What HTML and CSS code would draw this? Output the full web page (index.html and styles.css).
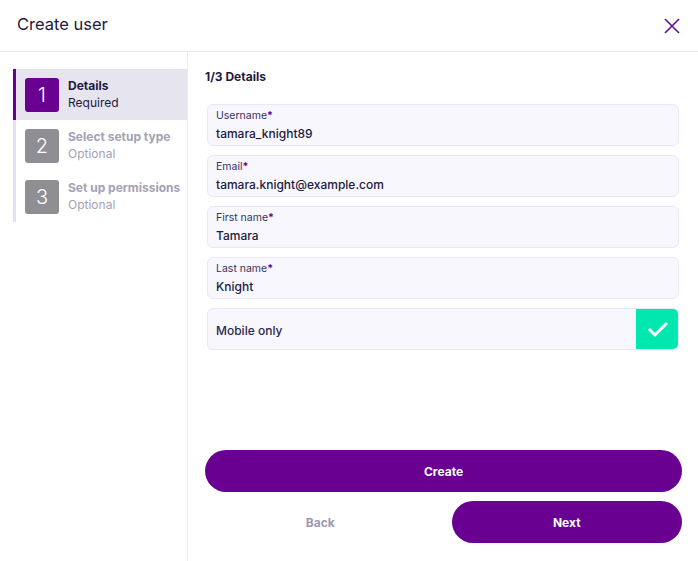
FILE: index.html
```html
<!DOCTYPE html>
<html lang="en">
<head>
    <meta charset="UTF-8">
    <meta name="viewport" content="width=device-width, initial-scale=1.0">
    <title>Create user</title>
    <link rel="stylesheet" href="styles.css">
</head>
<body>
    <div class="modal">
        <header class="modal-header">
            <h1 class="modal-title">Create user</h1>
            <button class="close-btn" aria-label="Close">
                <svg width="16" height="16" viewBox="0 0 16 16">
                    <path d="M1 1 L15 15 M15 1 L1 15" stroke="#6a0a92" stroke-width="1.6" fill="none"/>
                </svg>
            </button>
        </header>

        <div class="modal-body">
            <aside class="steps">
                <ul class="steps-list">
                    <li class="step active">
                        <span class="step-num">1</span>
                        <div class="step-text">
                            <span class="step-name">Details</span>
                            <span class="step-sub">Required</span>
                        </div>
                    </li>
                    <li class="step">
                        <span class="step-num">2</span>
                        <div class="step-text">
                            <span class="step-name">Select setup type</span>
                            <span class="step-sub">Optional</span>
                        </div>
                    </li>
                    <li class="step">
                        <span class="step-num">3</span>
                        <div class="step-text">
                            <span class="step-name">Set up permissions</span>
                            <span class="step-sub">Optional</span>
                        </div>
                    </li>
                </ul>
            </aside>

            <main class="content">
                <h2 class="content-title">1/3 Details</h2>

                <div class="fields">
                    <label class="field">
                        <span class="field-label">Username<b>*</b></span>
                        <span class="field-value">tamara_knight89</span>
                    </label>
                    <label class="field">
                        <span class="field-label">Email<b>*</b></span>
                        <span class="field-value">tamara.knight@example.com</span>
                    </label>
                    <label class="field">
                        <span class="field-label">First name<b>*</b></span>
                        <span class="field-value">Tamara</span>
                    </label>
                    <label class="field">
                        <span class="field-label">Last name<b>*</b></span>
                        <span class="field-value">Knight</span>
                    </label>
                    <label class="field field-check">
                        <span class="check-label">Mobile only</span>
                        <span class="check-box">
                            <svg width="22" height="18" viewBox="0 0 22 18">
                                <path d="M2 9 L8 15 L20 3" stroke="#fff" stroke-width="3" fill="none"/>
                            </svg>
                        </span>
                    </label>
                </div>

                <div class="actions">
                    <button class="btn btn-primary">Create</button>
                    <div class="actions-row">
                        <button class="btn btn-ghost">Back</button>
                        <button class="btn btn-primary">Next</button>
                    </div>
                </div>
            </main>
        </div>
    </div>
</body>
</html>
```

FILE: styles.css
```css
* {
    box-sizing: border-box;
    margin: 0;
    padding: 0;
    font-family: 'Inter', 'Liberation Sans', sans-serif;
}

body {
    background: #fff;
    color: #1e1a3c;
}

.modal {
    width: 698px;
    height: 561px;
    display: flex;
    flex-direction: column;
}

.modal-header {
    height: 52px;
    display: flex;
    align-items: center;
    justify-content: space-between;
    padding: 0 18px 0 17px;
    border-bottom: 1px solid #e9e7f5;
}

.modal-title {
    font-size: 16.5px;
    font-weight: 400;
    color: #1e1a3c;
    margin-top: -3px;
}

.close-btn {
    background: none;
    border: none;
    width: 16px;
    height: 16px;
    display: flex;
    cursor: pointer;
}

.modal-body {
    flex: 1;
    display: flex;
}

/* боковая панель шагов */
.steps {
    width: 188px;
    border-right: 1px solid #ecebf3;
    padding: 17px 0 0 13px;
}

.steps-list {
    list-style: none;
    border-left: 3px solid #e4e1f7;
}

.step {
    height: 51px;
    display: flex;
    align-items: center;
    gap: 9px;
    padding-left: 9px;
}

.step.active {
    background: #e6e4ee;
    border-left: 3px solid #6a0092;
    margin-left: -3px;
}

.step-num {
    width: 34px;
    height: 34px;
    border-radius: 3px;
    background: #8e8e93;
    color: #fff;
    font-size: 20px;
    font-weight: 300;
    display: flex;
    align-items: center;
    justify-content: center;
    flex-shrink: 0;
}

.step.active .step-num {
    background: #6a0092;
}

.step-text {
    display: flex;
    flex-direction: column;
    gap: 2px;
    font-size: 12px;
    line-height: 15px;
    color: #a4a1b4;
    white-space: nowrap;
    margin-top: -2px;
}

.step-name {
    font-weight: 700;
}

.step.active .step-text {
    color: #1e1a3c;
}

/* основная часть */
.content {
    flex: 1;
    padding: 17px 17px 0 17px;
    display: flex;
    flex-direction: column;
}

.content-title {
    font-size: 12px;
    font-weight: 700;
    line-height: 16px;
    color: #1e1a3c;
    margin-bottom: 19px;
}

.fields {
    display: flex;
    flex-direction: column;
    gap: 9px;
    padding: 0 2px;
}

.field {
    height: 42px;
    background: #f7f7fd;
    border: 1px solid #e9e7fa;
    border-radius: 6px;
    padding: 4px 8px 0;
    display: flex;
    flex-direction: column;
}

.field-label {
    font-size: 10.5px;
    line-height: 14px;
    color: #3a3060;
}

.field-label b {
    color: #6a0092;
}

.field-value {
    font-size: 12px;
    line-height: 20px;
    margin-top: 1px;
    color: #1e1a3c;
    font-weight: 500;
}

.field-check {
    flex-direction: row;
    align-items: center;
    justify-content: space-between;
    padding: 2px 0 0 8px;
    overflow: hidden;
}

.check-label {
    font-size: 12px;
    color: #2e2650;
    font-weight: 500;
}

.check-box {
    width: 43px;
    height: 42px;
    margin: -3px -1px -1px 0;
    background: #00e8b0;
    border-radius: 0 6px 6px 0;
    display: flex;
    align-items: center;
    justify-content: center;
}

.actions {
    margin-top: auto;
    margin-bottom: 18px;
    display: flex;
    flex-direction: column;
    gap: 9px;
    margin-right: -1px;
}

.actions-row {
    display: flex;
    gap: 16px;
}

.btn {
    height: 42px;
    flex-shrink: 0;
    border: none;
    border-radius: 21px;
    font-size: 12px;
    font-weight: 700;
    cursor: pointer;
}

.actions-row .btn {
    flex: 1;
}

.btn-primary {
    background: #6a0092;
    color: #fff;
}

.btn-ghost {
    background: none;
    color: #9d9ab0;
}
```
